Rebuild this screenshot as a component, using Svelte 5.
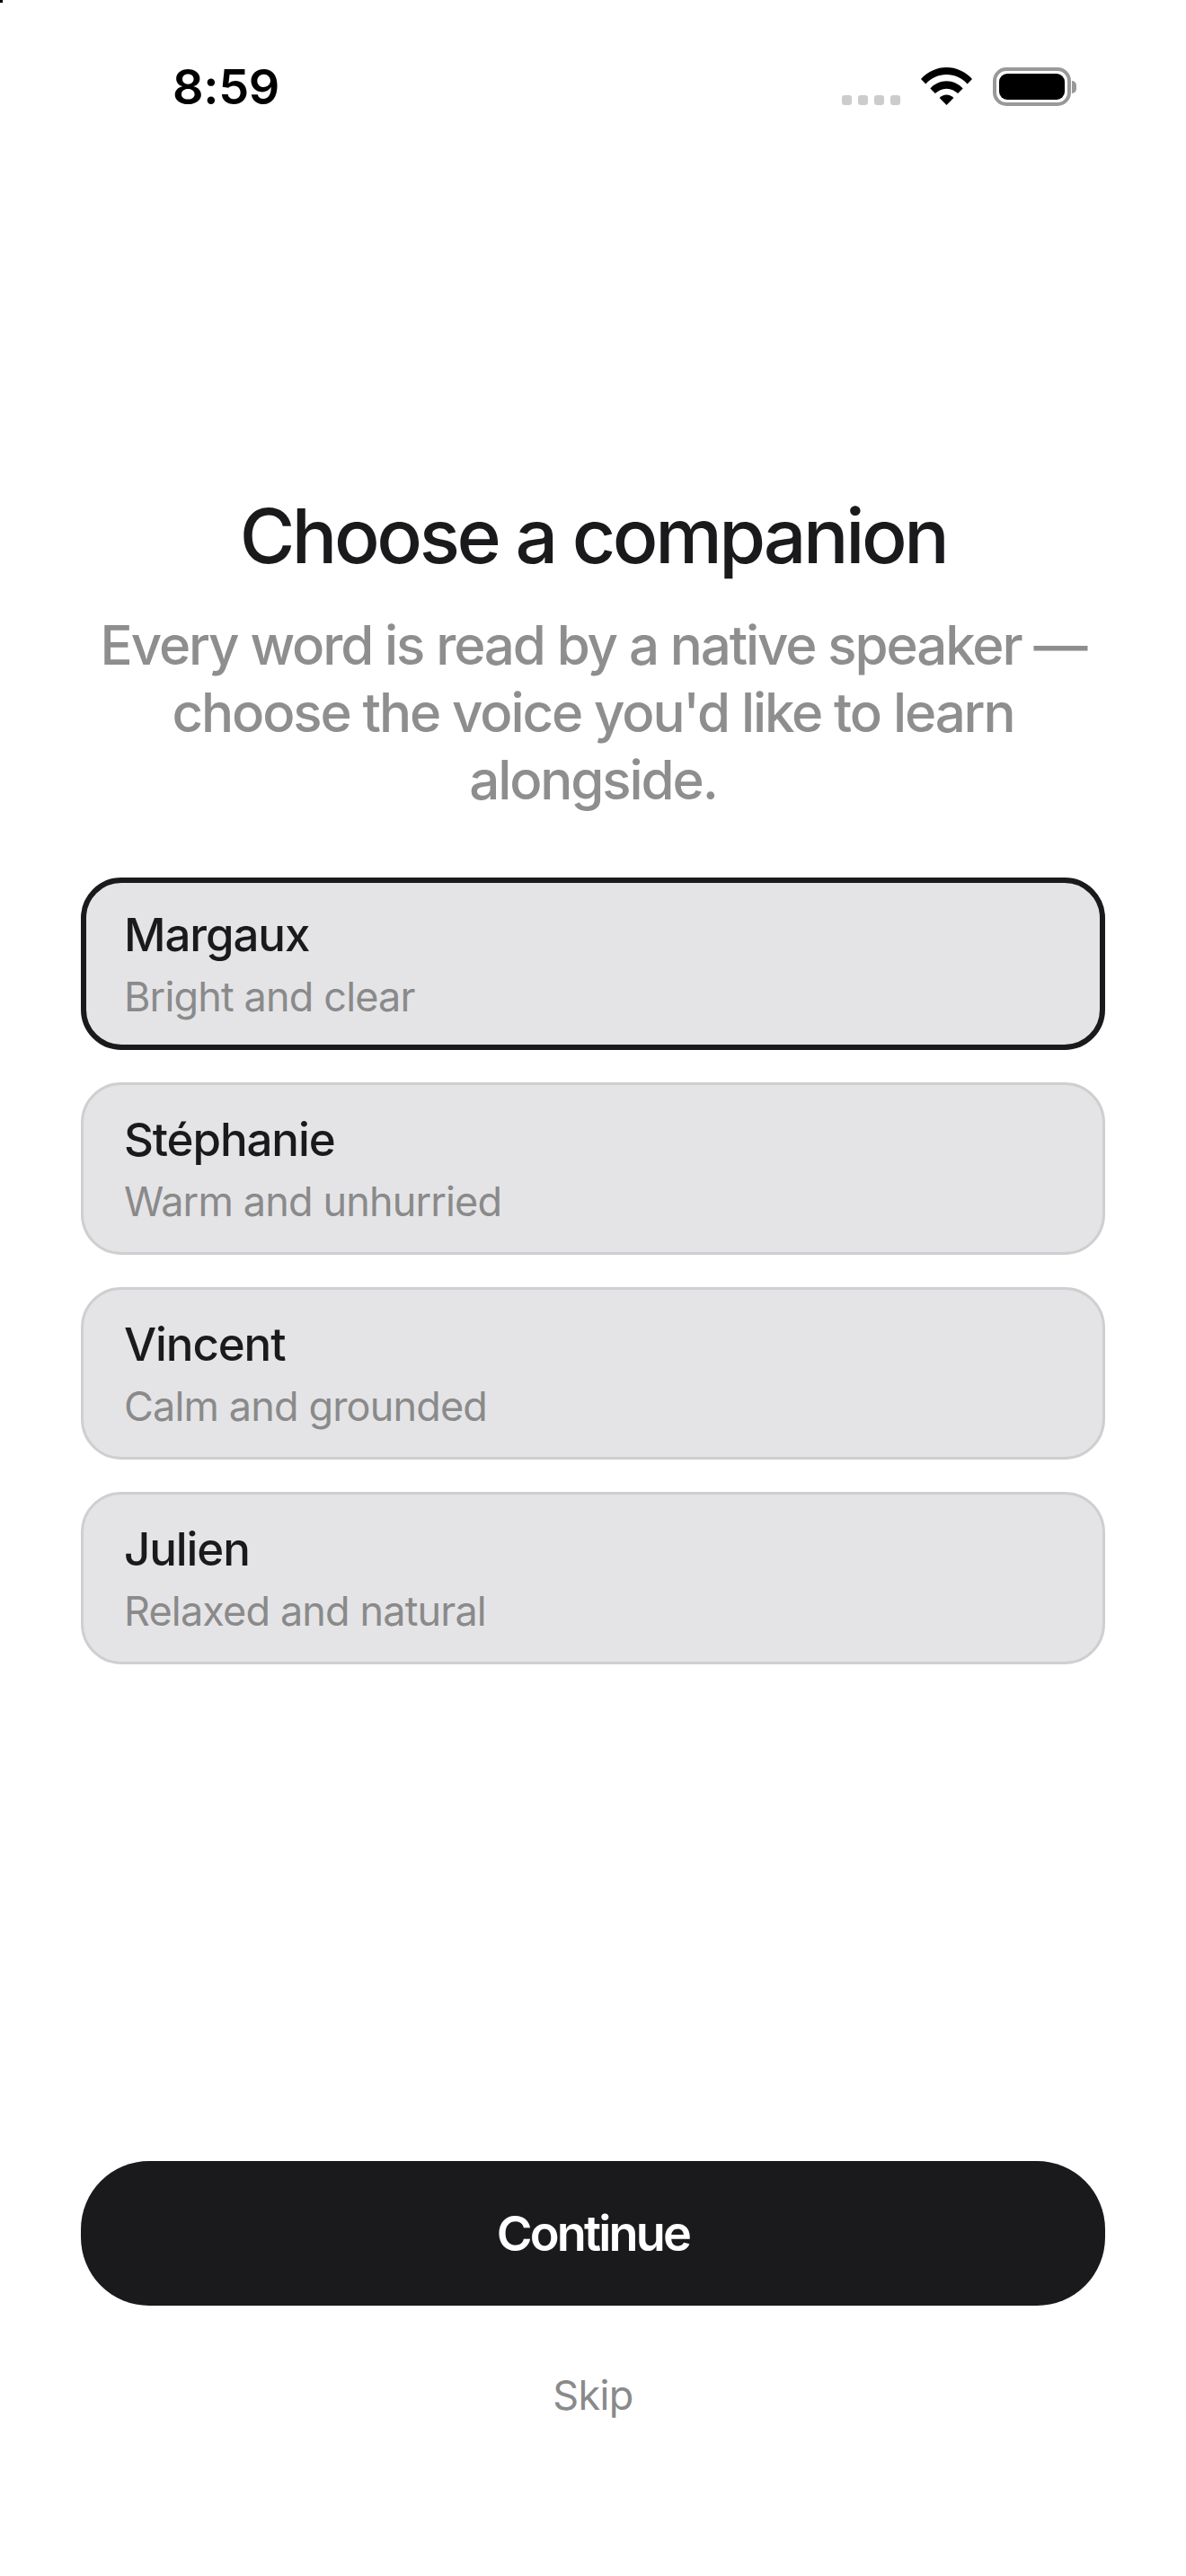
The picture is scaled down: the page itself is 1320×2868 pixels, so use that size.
<script>
    const voices = [
        { name: 'Margaux', note: 'Bright and clear' },
        { name: 'Stéphanie', note: 'Warm and unhurried' },
        { name: 'Vincent', note: 'Calm and grounded' },
        { name: 'Julien', note: 'Relaxed and natural' }
    ];

    let selected = 'Margaux';
</script>

<main class="screen">
    <div class="corner-mark"></div>

    <header class="status">
        <span class="time">8:59</span>
        <div class="status-icons">
            <div class="dots"><i></i><i></i><i></i><i></i></div>
            <svg class="wifi" viewBox="0 0 58 44" width="57" height="42" preserveAspectRatio="none">
                <path d="M0 13.5C7.5 5 18 0 29 0s21.500 5 29 13.500l-5.500 5.800C46.500 12.500 38 8.500 29 8.500S11.500 12.500 5.500 19.300Z" />
                <path d="M10.500 24.500C15 19.500 22 16 29 16s14 3.500 18.500 8.500l-5.700 6C38.500 27 34 24.800 29 24.800S19.500 27 16.200 30.500Z" />
                <path d="M21 35.500c2-2.200 5-3.500 8-3.500s6 1.300 8 3.500L29 44Z" />
            </svg>
            <div class="battery">
                <div class="battery-body"><div class="battery-fill"></div></div>
                <div class="battery-cap"></div>
            </div>
        </div>
    </header>

    <section class="intro">
        <h1>Choose a companion</h1>
        <p>Every word is read by a native speaker — choose the voice you'd like to learn alongside.</p>
    </section>

    <div class="voices">
        {#each voices as voice}
            <button class="voice" class:active={selected === voice.name} on:click={() => (selected = voice.name)}>
                <span class="name">{voice.name}</span>
                <span class="note">{voice.note}</span>
            </button>
        {/each}
    </div>

    <footer class="actions">
        <button class="continue">Continue</button>
        <button class="skip">Skip</button>
    </footer>
</main>

<style>
    :global(body) {
        background: #fff;
    }

    .screen {
        position: relative;
        width: 1320px;
        height: 2868px;
        box-sizing: border-box;
        display: flex;
        flex-direction: column;
        padding: 0 90px;
        background: #fff;
        color: #1a1a1c;
        font-family: Inter, "Liberation Sans", sans-serif;
    }

    .corner-mark {
        position: absolute;
        top: 0;
        left: 0;
        width: 3px;
        height: 3px;
        background: #000;
    }

    .status {
        height: 140px;
        margin: 0 -90px;
        padding: 70px 0 0 192px;
        box-sizing: border-box;
        display: flex;
        justify-content: space-between;
        align-items: flex-start;
    }

    .time {
        font-size: 54px;
        line-height: 54px;
        font-weight: 600;
        letter-spacing: -0.3px;
        color: #000;
    }

    .status-icons {
        display: flex;
        align-items: flex-end;
        gap: 23px;
        margin-right: 122px;
        margin-top: 5px;
    }

    .dots {
        display: flex;
        gap: 7px;
        margin-bottom: 1px;
    }

    .dots i {
        width: 11px;
        height: 11px;
        border-radius: 3px;
        background: #ccc;
    }

    .wifi {
        fill: #000;
        display: block;
        margin-bottom: 1px;
    }

    .battery {
        display: flex;
        align-items: center;
        gap: 1px;
    }

    .battery-body {
        width: 87px;
        height: 43px;
        box-sizing: border-box;
        padding: 3px;
        border: 4px solid #999;
        border-radius: 15px;
    }

    .battery-fill {
        width: 100%;
        height: 100%;
        background: #000;
        border-radius: 9px;
    }

    .battery-cap {
        width: 5px;
        height: 14px;
        background: #999;
        border-radius: 0 6px 6px 0;
    }

    .intro {
        margin-top: 407px;
        text-align: center;
    }

    h1 {
        margin: 0;
        font-size: 84px;
        line-height: 100px;
        font-weight: 500;
        letter-spacing: -3.4px;
    }

    .intro p {
        margin: 34px -10px 0;
        font-size: 60px;
        line-height: 75px;
        font-weight: 500;
        letter-spacing: -2.1px;
        color: #8e8e8e;
    }

    .voices {
        margin-top: 71px;
        display: flex;
        flex-direction: column;
        gap: 36px;
    }

    .voice {
        height: 192px;
        box-sizing: border-box;
        padding: 0 45px;
        display: flex;
        flex-direction: column;
        justify-content: center;
        align-items: flex-start;
        gap: 10px;
        background: #e4e4e7;
        border: 3px solid #cfcfd2;
        border-radius: 45px;
        font-family: inherit;
        text-align: left;
    }

    .voice.active {
        border: 6px solid #1a1a1c;
        padding: 0 42px;
    }

    .name {
        position: relative;
        top: 1px;
        font-size: 51px;
        line-height: 62px;
        font-weight: 500;
        letter-spacing: -1.1px;
        color: #1a1a1c;
    }

    .note {
        position: relative;
        top: 1px;
        font-size: 45px;
        line-height: 56px;
        letter-spacing: -0.85px;
        color: #8a8a8a;
    }

    .actions {
        margin-top: auto;
        padding-bottom: 171px;
        display: flex;
        flex-direction: column;
        align-items: center;
    }

    .continue {
        width: 100%;
        height: 161px;
        border: none;
        border-radius: 76px;
        background: #1a1a1c;
        color: #fff;
        font-family: inherit;
        font-size: 54px;
        font-weight: 600;
        letter-spacing: -2.8px;
    }

    .skip {
        margin-top: 70px;
        padding: 0;
        border: none;
        background: none;
        color: #8a8a8a;
        font-family: inherit;
        font-size: 45px;
        line-height: 60px;
        letter-spacing: -0.6px;
    }
</style>
